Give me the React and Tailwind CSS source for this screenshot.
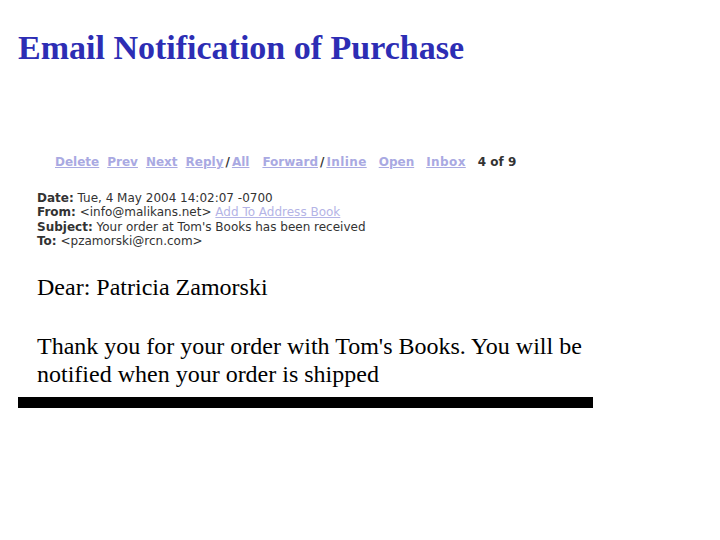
const navLinks = [
  { label: "Delete", ml: "ml-0" },
  { label: "Prev", ml: "ml-[8px]" },
  { label: "Next", ml: "ml-[8px]" },
];

export default function App() {
  return (
    <div className="w-[720px] h-[540px] bg-white overflow-hidden">
      <h1 className="pl-[18px] pt-[28px] text-[34px] leading-[40px] font-bold text-[#2d2db4] font-['Liberation_Serif',serif]">
        Email Notification of Purchase
      </h1>

      <div className="pl-[55px] mt-[87px] text-[12px] leading-[15px] font-bold font-['DejaVu_Sans',Verdana,sans-serif] text-[#a9a9e2] whitespace-nowrap">
        {navLinks.map((l) => (
          <span key={l.label} className={`underline ${l.ml}`}>
            {l.label}
          </span>
        ))}
        <span className="underline ml-[8px]">Reply</span>
        <span className="text-[#333] mx-[2px]">/</span>
        <span className="underline">All</span>
        <span className="underline ml-[13px]">Forward</span>
        <span className="text-[#333] mx-[2px]">/</span>
        <span className="underline tracking-[0.4px]">Inline</span>
        <span className="underline ml-[12px]">Open</span>
        <span className="underline ml-[12px] tracking-[0.4px]">Inbox</span>
        <span className="ml-[12px] text-[#333]">4 of 9</span>
      </div>

      <div className="pl-[37px] mt-[21px] text-[12px] leading-[14.4px] font-['DejaVu_Sans',Verdana,sans-serif] text-[#333]">
        <div>
          <b>Date:</b> Tue, 4 May 2004 14:02:07 -0700
        </div>
        <div>
          <b>From:</b> &lt;info@malikans.net&gt;{" "}
          <span className="underline text-[#b4b4e6]">Add To Address Book</span>
        </div>
        <div>
          <b>Subject:</b> Your order at Tom's Books has been received
        </div>
        <div>
          <b>To:</b> &lt;pzamorski@rcn.com&gt;
        </div>
      </div>

      <div className="pl-[37px] pr-[110px] mt-[24px] text-[24px] leading-[28px] font-['Liberation_Serif',serif] text-black">
        <p>Dear: Patricia Zamorski</p>
        <p className="mt-[31px]">
          Thank you for your order with Tom's Books. You will be notified when your order is shipped
        </p>
      </div>

      <div className="ml-[18px] mt-[9px] w-[575px] h-[11px] bg-black" />
    </div>
  );
}
